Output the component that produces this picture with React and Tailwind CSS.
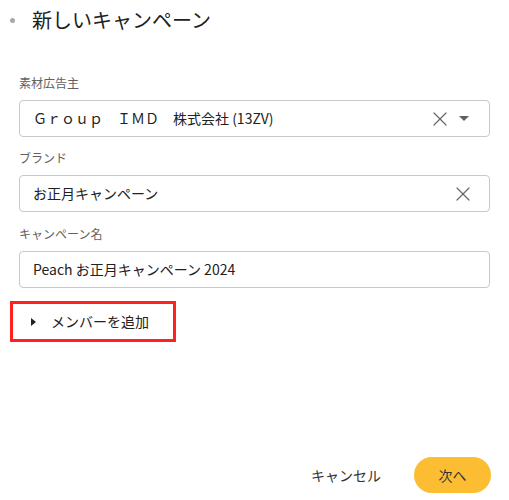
import { X } from "lucide-react";

const font = { fontFamily: "'Noto Sans CJK JP', 'Noto Sans', sans-serif" };

function Field({ label, value, clear, caret, className = "" }) {
  return (
    <div className={className}>
      <div className="text-[12px] leading-[16px] text-[#616161] mb-[9px]">{label}</div>
      <div className={`h-[37px] border border-[#c8c8c8] rounded-[4px] flex items-center pl-[13px] ${caret ? "pr-[20px]" : "pr-[14px]"}`}>
        <span className="flex-1 text-[14px] text-[#212121] whitespace-pre">{value}</span>
        {clear && <X size={24} strokeWidth={1.2} className="text-[#666]" />}
        {caret && (
          <svg width="10" height="5" viewBox="0 0 10 5" className="ml-[7px]">
            <path d="M0 0 L10 0 L5 5 Z" fill="#616161" />
          </svg>
        )}
      </div>
    </div>
  );
}

export default function App() {
  return (
    <div className="h-[500px] w-[509px] bg-white flex flex-col text-[#212121]" style={font}>
      {/* Header */}
      <div className="h-10 flex items-center pl-[10px]">
        <div className="w-[5px] h-[5px] rounded-full bg-[#a8a8a8]" />
        <h1 className="ml-[17px] text-[20px] text-[#212121]">新しいキャンペーン</h1>
      </div>

      <div className="px-[19px] mt-[35px]">
        <Field label="素材広告主" value="Ｇｒｏｕｐ　ＩＭＤ　株式会社 (13ZV)" clear caret />
        <Field label="ブランド" value="お正月キャンペーン" clear className="mt-[13px]" />
        <Field label="キャンペーン名" value="Peach お正月キャンペーン 2024" className="mt-[14px]" />
      </div>

      <div className="ml-[10px] mt-[13px] w-[166px] h-[41px] border-[3px] border-[#ff2020] flex items-center pl-[18px]">
        <svg width="5" height="8" viewBox="0 0 5 8">
          <path d="M0 0 L5 4 L0 8 Z" fill="#212121" />
        </svg>
        <span className="ml-[15px] text-[14px] text-[#212121]">メンバーを追加</span>
      </div>

      <div className="mt-auto mb-[7px] flex items-center justify-end pr-[18px]">
        <button className="text-[14px] text-[#333] mr-[33px]">キャンセル</button>
        <button className="w-[77px] h-[36px] rounded-full bg-[#fdbd33] text-[14px] text-[#333]">次へ</button>
      </div>
    </div>
  );
}
